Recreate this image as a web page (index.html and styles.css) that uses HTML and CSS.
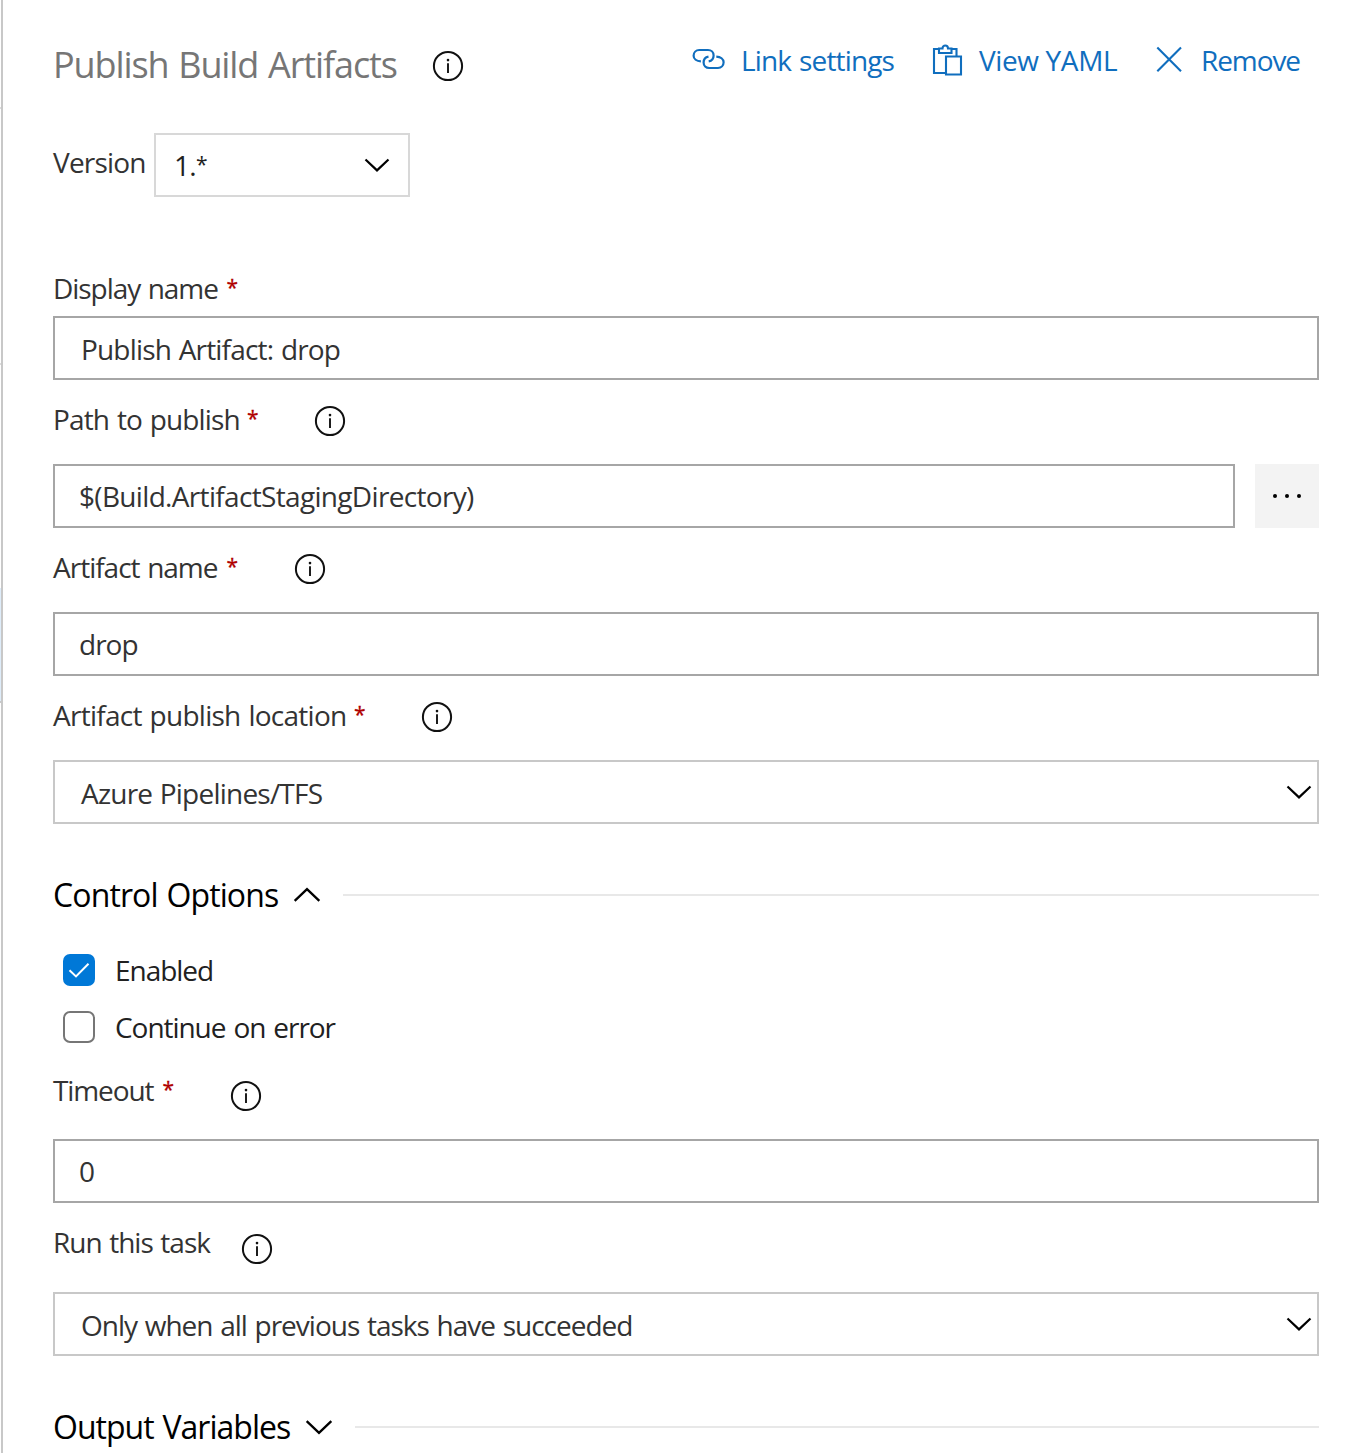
FILE: index.html
```
<!DOCTYPE html>
<html lang="en">
<head>
<meta charset="utf-8">
<title>Publish Build Artifacts</title>
<link rel="stylesheet" href="styles.css">
</head>
<body>
<svg class="defs" aria-hidden="true">
  <symbol id="info" viewBox="0 0 32 32"><circle cx="16" cy="16" r="14.1" fill="none" stroke="currentColor" stroke-width="2"/><path d="M16 13.2V23" stroke="currentColor" stroke-width="1.9"/><circle cx="16" cy="10.1" r="1.3" fill="currentColor"/></symbol>
  <symbol id="chevron" viewBox="0 0 28 16"><path d="M2.5 2.5L14 13.4L25.5 2.5" fill="none" stroke="currentColor" stroke-width="2.2"/></symbol>
</svg>
<div class="page">
  <aside class="task-list"><div class="row first"></div><div class="row"></div><div class="row gap"></div><div class="row selected"></div></aside>
  <main class="panel">
    <header class="header">
      <h1 class="title">Publish Build Artifacts</h1>
      <svg class="info"><use href="#info"/></svg>
      <nav class="tools">
        <a class="tool link"><svg class="tool-icon" viewBox="0 0 34 34"><g fill="none" stroke="currentColor" stroke-width="2.2"><path id="loop" d="M8.9 15.4C4.6 15.2 1.6 13 1.6 9.7C1.6 6.5 4 4 7.2 4H16C19.3 4 21.6 6.4 21.6 9.4C21.6 12.5 19.4 14.8 16.7 15.3"/><use href="#loop" transform="rotate(180 16.6 13)"/></g></svg><span>Link settings</span></a>
        <a class="tool yaml"><svg class="tool-icon" viewBox="0 0 34 34"><g fill="none" stroke="currentColor" stroke-width="2.1"><path d="M14 27H3V3H8M20 3H25.5V10"/><path d="M8 2.5H11.5C11.5 -1.6 17 -1.6 17 2.5H20.5V7H8Z"/><path d="M15 10.5H30V28.5H15Z"/></g></svg><span>View YAML</span></a>
        <a class="tool remove"><svg class="tool-icon" viewBox="0 0 34 34"><path d="M3.3 1.5L27 25.2M27 1.5L3.3 25.2" fill="none" stroke="currentColor" stroke-width="2.1"/></svg><span>Remove</span></a>
      </nav>
    </header>

    <div class="version">
      <span class="version-label">Version</span>
      <div class="version-select"><span>1.<span class="star">*</span></span><svg class="chevron"><use href="#chevron"/></svg></div>
    </div>

    <label class="label display"><span class="text">Display name</span><span class="req">*</span></label>
    <div class="box"><span class="v-display">Publish Artifact: drop</span></div>

    <label class="label path"><span class="text">Path to publish</span><span class="req">*</span><svg class="info"><use href="#info"/></svg></label>
    <div class="path-row">
      <div class="box"><span class="v-path">$(Build.ArtifactStagingDirectory)</span></div>
      <button class="more"><i></i><i></i><i></i></button>
    </div>

    <label class="label artifact"><span class="text">Artifact name</span><span class="req">*</span><svg class="info"><use href="#info"/></svg></label>
    <div class="box"><span class="v-drop">drop</span></div>

    <label class="label location"><span class="text">Artifact publish location</span><span class="req">*</span><svg class="info"><use href="#info"/></svg></label>
    <div class="box select"><span class="v-azure">Azure Pipelines/TFS</span><svg class="chevron"><use href="#chevron"/></svg></div>

    <h2 class="section control"><span>Control Options</span><svg class="section-chevron up"><use href="#chevron"/></svg></h2>
    <div class="check"><span class="tick on"><svg viewBox="0 0 32 32"><path d="M6.5 16.3L13 22.4L25.5 9.8" fill="none" stroke="#fff" stroke-width="2"/></svg></span><span>Enabled</span></div>
    <div class="check"><span class="tick"></span><span>Continue on error</span></div>

    <label class="label timeout"><span class="text">Timeout</span><span class="req">*</span><svg class="info"><use href="#info"/></svg></label>
    <div class="box"><span class="v-zero">0</span></div>

    <label class="label run"><span class="text">Run this task</span><svg class="info"><use href="#info"/></svg></label>
    <div class="box select"><span class="v-only">Only when all previous tasks have succeeded</span><svg class="chevron"><use href="#chevron"/></svg></div>

    <h2 class="section output"><span>Output Variables</span><svg class="section-chevron"><use href="#chevron"/></svg></h2>
  </main>
</div>
</body>
</html>
```
FILE: styles.css
```
* { box-sizing: border-box; }
body { margin: 0; background: #fff; color: #333; font: 28px/40px "Open Sans", "Noto Sans", sans-serif; }
.defs { position: absolute; width: 0; height: 0; }
svg { display: block; flex: none; overflow: visible; }
.page { display: flex; height: 1453px; overflow: hidden; }

/* Edge of the task list on the left */
.task-list { width: 3px; flex: none; border-right: 2px solid #c8c8c8; }
.row { height: 256px; border-bottom: 2px solid #dcdcdc; }
.row.first { height: 109px; }
.row.gap { height: 223px; border: 0; }
.row.selected { height: 115px; background: #deecf9; border-color: #c8c8c8; }

.panel { flex: 1; padding: 0 47px 0 50px; display: flex; flex-direction: column; }
.panel > * { flex: none; }
.info { width: 32px; height: 32px; color: #111; }
.chevron { width: 28px; height: 16px; color: #000; }

.header { height: 133px; display: flex; align-items: flex-start; }
.title { margin: 45px 0 0; width: 379px; font-size: 36px; line-height: 40px; font-weight: 400; letter-spacing: -1.1px; word-spacing: 1.5px; color: #767676; white-space: nowrap; }
.header > .info { margin-top: 50px; }
.tools { display: flex; margin: 40px 1px 0 auto; color: #106ebe; letter-spacing: -.81px; white-space: nowrap; }
.tool { display: flex; }
.tool-icon { width: 34px; height: 34px; margin-top: 6px; }
.link { width: 239px; gap: 15px; letter-spacing: -.85px; word-spacing: 1.5px; }
.yaml { width: 223px; gap: 14px; letter-spacing: -.38px; }
.remove { width: 164px; gap: 13px; letter-spacing: -1.08px; }

.version { display: flex; height: 64px; margin-bottom: 65px; }
.version-label { width: 101px; padding-top: 9px; letter-spacing: -.8px; }
.version-select { width: 256px; border: 2px solid #d8d8d8; padding: 0 17px 0 18px; display: flex; align-items: center; justify-content: space-between; color: #212121; letter-spacing: -.7px; }
.star, .req { font-size: 21px; }
.star { position: relative; top: -4px; line-height: 0; }

.label { height: 84px; padding-top: 19px; display: flex; white-space: nowrap; }
.label .req { width: 67px; color: #b00000; line-height: 39px; -webkit-text-stroke: .3px #b00000; }
.label .info { margin-top: 6px; }
.display { height: 54px; padding-top: 6px; letter-spacing: -1.05px; word-spacing: 1.3px; }
.display .text, .artifact .text { width: 173.5px; }
.path { letter-spacing: -.85px; word-spacing: 1.3px; }
.path .text { width: 194px; }
.artifact { letter-spacing: -1px; word-spacing: 1.3px; }
.location { letter-spacing: -.73px; word-spacing: 1.3px; }
.location .text { width: 301px; }
.timeout { height: 96px; padding-top: 27px; letter-spacing: -1.1px; }
.timeout .text { width: 109.5px; }
.run { height: 89px; letter-spacing: -1px; word-spacing: 1.3px; }
.run .text { width: 188px; }
.timeout .info { margin-top: 10px; }
.run .info { margin-top: 11px; }

.box { height: 64px; border: 2px solid #a6a6a6; padding-left: 24px; display: flex; align-items: center; justify-content: space-between; white-space: nowrap; }
.box.select { border-color: #c8c8c8; padding: 0 4px 0 26px; }
.box.select .chevron { margin-top: -1px; }
.v-display { padding: 1px 0 0 2px; letter-spacing: -.83px; word-spacing: 1.3px; }
.v-path { letter-spacing: -.67px; }
.v-drop { letter-spacing: -1px; }
.v-azure { padding-top: 2px; letter-spacing: -.78px; word-spacing: 1px; }
.v-only { padding-top: 1px; letter-spacing: -1px; word-spacing: 1.4px; }
.path-row { display: flex; gap: 20px; }
.path-row .box { flex: 1; }
.more { width: 64px; height: 64px; border: 0; padding: 0; background: #f3f3f3; display: flex; align-items: center; justify-content: center; gap: 8px; }
.more i { width: 4px; height: 4px; border-radius: 50%; background: #000; }

.section { display: flex; align-items: center; height: 40px; margin: 51px 0 0; font-size: 32px; font-weight: 400; color: #000; white-space: nowrap; }
.section > span { margin-top: -1px; }
.section::after { content: ""; flex: 1; height: 2px; background: #e8e8e8; margin-left: 21px; }
.section-chevron { width: 30px; height: 18px; margin-left: 14px; }
.up { transform: scaleY(-1); }
.control { letter-spacing: -.88px; word-spacing: 1.3px; margin-bottom: 39px; }
.output { letter-spacing: -.98px; word-spacing: 1.4px; }

.check { display: flex; align-items: center; gap: 20px; height: 32px; margin: 0 0 25px 10px; color: #212121; letter-spacing: -1.05px; word-spacing: 1.8px; }
.check + .check { margin-bottom: 0; }
.tick { width: 32px; height: 32px; border: 2px solid #767676; border-radius: 7px; }
.tick.on { border: 0; background: #0078d7; }
```
